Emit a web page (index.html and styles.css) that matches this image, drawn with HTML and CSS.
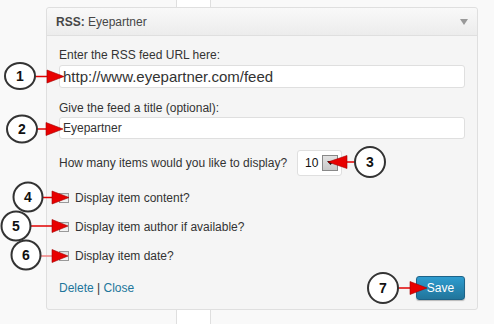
FILE: index.html
```html
<html>

  <head>
    <link rel="stylesheet" href="styles.css">
  </head>

  <body>

  <div class="page">

    <div class="strip top"><div class="col"></div></div>

    <div class="widget">
      <div class="widget-top">
        <h3 class="title"><b>RSS:</b> Eyepartner</h3>
        <svg class="toggle" width="8" height="6" viewBox="0 0 8 6"><path d="M0 0 H8 L4 6 Z" fill="#999"/></svg>
      </div>

      <div class="widget-inside">
        <label class="label">Enter the RSS feed URL here:</label>
        <input class="field url" type="text" value="http://www.eyepartner.com/feed">

        <label class="label second">Give the feed a title (optional):</label>
        <input class="field name" type="text" value="Eyepartner">

        <div class="items">
          <span>How many items would you like to display?</span>
          <div class="select">
            <span class="value">10</span>
            <span class="drop"><svg width="7" height="4" viewBox="0 0 7 4"><path d="M0 0 H7 L3.5 4 Z" fill="#111"/></svg></span>
          </div>
        </div>

        <div class="check-row first"><span class="check"></span>Display item content?</div>
        <div class="check-row"><span class="check"></span>Display item author if available?</div>
        <div class="check-row"><span class="check"></span>Display item date?</div>

        <div class="controls">
          <div class="links"><a href="#">Delete</a> | <a href="#">Close</a></div>
          <button class="save">Save</button>
        </div>
      </div>
    </div>

    <div class="strip bottom"><div class="col"></div></div>

    <!-- numbered callouts drawn over the form -->
    <svg class="callouts" width="494" height="324" viewBox="0 0 494 324">
      <g class="lines">
        <line x1="35" y1="76.5" x2="48" y2="76.5"/>
        <line x1="37" y1="129" x2="47" y2="129"/>
        <line x1="346" y1="162" x2="355" y2="162"/>
        <line x1="42" y1="197.5" x2="53" y2="197.5"/>
        <line x1="31" y1="226" x2="53" y2="226"/>
        <line class="pale" x1="41" y1="256" x2="53" y2="256"/>
        <line x1="398" y1="288" x2="411" y2="288"/>
      </g>
      <g class="heads">
        <polygon points="47,70 47,83 64,76.5"/>
        <polygon points="46,122.5 46,135.5 63,129"/>
        <polygon points="347,155.5 347,168.5 328,162"/>
        <polygon points="52,191 52,204 69,197.5"/>
        <polygon points="52,219.5 52,232.5 68,226"/>
        <polygon points="52,249.5 52,262.5 68,256"/>
        <polygon points="410,281.5 410,294.5 427,288"/>
      </g>
      <g class="rings">
        <ellipse cx="20" cy="76" rx="15" ry="13"/>
        <ellipse cx="22" cy="129" rx="15" ry="13.5"/>
        <circle cx="370" cy="162" r="15"/>
        <circle cx="28" cy="197" r="14.5"/>
        <circle cx="16" cy="226" r="14.5"/>
        <circle cx="26" cy="255" r="14.5"/>
        <circle cx="383" cy="288" r="15"/>
      </g>
      <g class="nums">
        <text x="20" y="81">1</text>
        <text x="22" y="134">2</text>
        <text x="370" y="167">3</text>
        <text x="28" y="202">4</text>
        <text x="16" y="231">5</text>
        <text x="26" y="260">6</text>
        <text x="383" y="293">7</text>
      </g>
    </svg>

  </div>

  </body>

</html>
```

FILE: styles.css
```css
  body {
    margin: 0;
    font-family: "Liberation Sans", Arial, sans-serif;
    font-size: 12px;
    color: #333;
    background-color: #f9f9f9;
  }

  .page {
    position: relative;
    width: 494px;
    height: 324px;
    overflow: hidden;
  }

  .strip {
    height: 7px;
  }

  .strip.bottom {
    height: 14px;
  }

  .col {
    margin-left: 176px;
    width: 33px;
    height: 100%;
    background-color: white;
    border-left: 1px solid #dfdfdf;
    border-right: 1px solid #dfdfdf;
  }

  .widget {
    margin-left: 46px;
    width: 430px;
    border: 1px solid #dfdfdf;
    border-radius: 3px;
    background-color: #f5f5f5;
  }

  .widget-top {
    display: flex;
    align-items: center;
    justify-content: space-between;
    height: 27px;
    padding: 0 9px;
    border-bottom: 1px solid #dfdfdf;
    background: linear-gradient(#f9f9f9, #ececec);
    border-radius: 3px 3px 0 0;
  }

  .title {
    margin: 0;
    font-size: 12px;
    font-weight: normal;
    color: #464646;
  }

  .widget-inside {
    padding: 12px 12px 9px;
  }

  .label {
    display: block;
    line-height: 15px;
  }

  .label.second {
    margin-top: 13px;
  }

  .field {
    display: block;
    box-sizing: border-box;
    width: 406px;
    margin: 2px 0 0;
    padding: 0 3px;
    border: 1px solid #dfdfdf;
    border-radius: 3px;
    background-color: white;
    font-family: "Liberation Sans", Arial, sans-serif;
    color: #333;
    outline: none;
  }

  .field.url {
    height: 23px;
    font-size: 15px;
  }

  .field.name {
    height: 22px;
    margin-top: 1px;
    font-size: 12px;
  }

  .items {
    display: flex;
    align-items: center;
    margin-top: 11px;
  }

  .select {
    display: flex;
    align-items: center;
    box-sizing: border-box;
    height: 26px;
    width: 45px;
    margin-left: 10px;
    padding-left: 7px;
    border: 1px solid #dfdfdf;
    border-radius: 3px;
    background-color: white;
    color: #111;
  }

  .drop {
    display: flex;
    align-items: center;
    justify-content: center;
    box-sizing: border-box;
    width: 16px;
    height: 16px;
    margin-left: 4px;
    border: 1px solid #888;
    background: linear-gradient(#e2e2e2, #c8c8c8);
  }

  .check-row {
    display: flex;
    align-items: center;
    height: 15px;
    margin-top: 14px;
  }

  .check {
    box-sizing: border-box;
    width: 10px;
    height: 10px;
    margin-right: 6px;
    border: 1px solid #999;
    background: linear-gradient(#dcdcdc, #f4f4f4);
  }

  .controls {
    display: flex;
    align-items: center;
    justify-content: space-between;
    margin-top: 13px;
  }

  .links a {
    color: #21759b;
    text-decoration: none;
  }

  .save {
    width: 49px;
    height: 24px;
    padding: 0;
    border: 1px solid #1d6388;
    border-radius: 3px;
    background: linear-gradient(#2e9ccf, #21759b);
    box-shadow: 0 1px 1px rgba(0, 0, 0, 0.25);
    color: white;
    font-family: "Liberation Sans", Arial, sans-serif;
    font-size: 12px;
  }

  .callouts {
    position: absolute;
    top: 0;
    left: 0;
    pointer-events: none;
  }

  .callouts .lines line {
    stroke: #e00000;
    stroke-width: 1.5;
  }

  .callouts .lines line.pale {
    stroke: #f08080;
  }

  .callouts .heads polygon {
    fill: #e80000;
    stroke: #a00000;
    stroke-width: 0.6;
  }

  .callouts .rings ellipse,
  .callouts .rings circle {
    fill: white;
    stroke: #333;
    stroke-width: 2;
  }

  .callouts .nums text {
    font-family: "Liberation Sans", Arial, sans-serif;
    font-size: 14px;
    font-weight: bold;
    text-anchor: middle;
    fill: #111;
  }
```
